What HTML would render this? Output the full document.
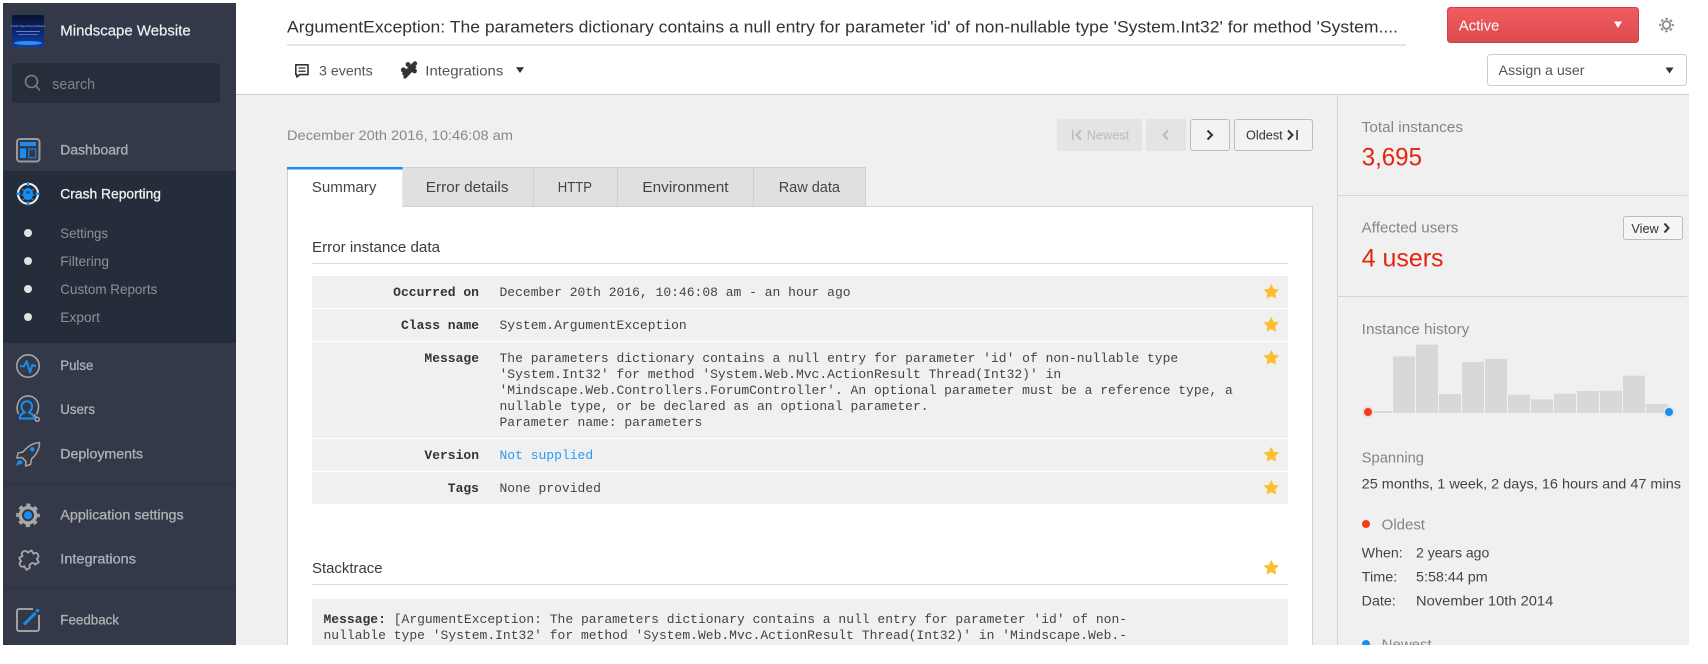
<!DOCTYPE html>
<html lang="en">
<head>
<meta charset="utf-8">
<title>ArgumentException - Crash Reporting</title>
<style>
html,body{margin:0;padding:0;background:#fff;width:1708px;height:664px;overflow:hidden}
svg{display:block}
text{font-family:"Liberation Sans",sans-serif;white-space:pre}
.m{font-family:"Liberation Mono",monospace;font-size:13px;fill:#444}
.mb{font-family:"Liberation Mono",monospace;font-size:13px;font-weight:700;fill:#333}
.nav{font-size:14px;fill:#aeb0b6;stroke:#aeb0b6;stroke-width:.3}
.sub{font-size:14px;fill:#8e919a}
.lab{font-size:14.5px;fill:#858585}
.val{font-size:14px;fill:#444}
.num{font-size:25px;fill:#e1260d}
.tab{font-size:14.5px;fill:#444}
.h{font-size:14.5px;fill:#3a3a3a}
</style>
</head>
<body>
<svg width="1708" height="664" viewBox="0 0 1708 664" xmlns="http://www.w3.org/2000/svg">
<defs>
<linearGradient id="red" x1="0" y1="0" x2="0" y2="1"><stop offset="0" stop-color="#f25c60"/><stop offset="1" stop-color="#dc4b4d"/></linearGradient>
<linearGradient id="logo" x1="0" y1="0" x2="0" y2="1"><stop offset="0" stop-color="#0a1230"/><stop offset=".6" stop-color="#0b2a78"/><stop offset="1" stop-color="#0d3fa8"/></linearGradient>
<polygon id="star" points="0,-7.5 2.2,-2.9 7.13,-2.32 3.6,1.17 4.41,6.07 0,3.8 -4.41,6.07 -3.6,1.17 -7.13,-2.32 -2.2,-2.9" fill="#fdbf2d" stroke="#fdbf2d" stroke-width=".6" stroke-linejoin="round"/>
</defs>

<!-- page -->
<rect width="1708" height="664" fill="#fff"/>
<rect x="236" y="94" width="1453" height="551" fill="#f0f0f0"/>
<rect x="236" y="94" width="1453" height="1" fill="#d0d0d0"/>

<!-- sidebar -->
<rect x="3" y="3" width="233" height="642" fill="#333948"/>
<rect x="3" y="171" width="233" height="172" fill="#252c3a"/>
<rect x="3" y="483" width="233" height="1" fill="#2a303d"/>
<rect x="3" y="588" width="233" height="1" fill="#2a303d"/>

<!-- logo -->
<rect x="12" y="15" width="32" height="32" rx="2" fill="url(#logo)"/>
<text x="28" y="27" font-size="3" fill="#9fb8ea" text-anchor="middle">Crash Reporting Software</text>
<rect x="16" y="31" width="24" height="1" fill="#5f80c8"/>
<rect x="18" y="34" width="20" height="1" fill="#4f70c0"/>
<ellipse cx="28" cy="43" rx="14" ry="2" fill="#2a8cf5"/>
<text x="60.3" y="35.5" font-size="14.5" fill="#eef0f2" stroke="#eef0f2" stroke-width=".2" textLength="130.4" lengthAdjust="spacingAndGlyphs">Mindscape Website</text>

<!-- search -->
<rect x="12" y="63" width="208" height="40" rx="3" fill="#262d3b"/>
<circle cx="31.5" cy="81.5" r="6" fill="none" stroke="#7b7f86" stroke-width="1.6"/>
<path d="M36 86l4 4.5" stroke="#7b7f86" stroke-width="1.6" fill="none"/>
<text x="52.3" y="89" font-size="14.5" fill="#80848c" textLength="42.7" lengthAdjust="spacingAndGlyphs">search</text>

<!-- nav: dashboard -->
<rect x="17" y="139" width="22.5" height="22.5" rx="3" fill="none" stroke="#9a9a9a" stroke-width="2"/>
<rect x="20" y="142" width="16" height="4" fill="#1a8df0"/>
<rect x="20" y="148.5" width="6" height="9.5" fill="#1a8df0"/>
<rect x="28.8" y="149" width="6.9" height="8.7" fill="none" stroke="#1a8df0" stroke-width="1"/>
<text class="nav" x="60.3" y="154.3" textLength="68" lengthAdjust="spacingAndGlyphs">Dashboard</text>

<!-- nav: crash reporting -->
<circle cx="28" cy="193.7" r="10" fill="none" stroke="#f2f2f2" stroke-width="2"/>
<path d="M28 182v4M28 201.5v4M16.5 193.7h4M35.5 193.7h4" stroke="#1a8df0" stroke-width="2.4"/>
<ellipse cx="28" cy="194" rx="5" ry="6" fill="#1a8df0"/>
<path d="M22 189l3 2M34 189l-3 2M21.5 195h3M34.5 195h-3M22.5 200l3-2M33.5 200l-3-2" stroke="#1a8df0" stroke-width="1.2"/>
<rect x="26" y="191" width="4" height="3" fill="#0c5fae"/>
<text x="60.3" y="198.3" font-size="14" fill="#f2f3f4" stroke="#f2f3f4" stroke-width=".3" textLength="100.7" lengthAdjust="spacingAndGlyphs">Crash Reporting</text>

<circle cx="28" cy="233" r="4" fill="#e2e2e2"/>
<text class="sub" x="60.3" y="238" textLength="47.7" lengthAdjust="spacingAndGlyphs">Settings</text>
<circle cx="28" cy="261" r="4" fill="#e2e2e2"/>
<text class="sub" x="60.3" y="266" textLength="48.7" lengthAdjust="spacingAndGlyphs">Filtering</text>
<circle cx="28" cy="289" r="4" fill="#e2e2e2"/>
<text class="sub" x="60.3" y="294" textLength="97" lengthAdjust="spacingAndGlyphs">Custom Reports</text>
<circle cx="28" cy="317" r="4" fill="#e2e2e2"/>
<text class="sub" x="60.3" y="322" textLength="39.7" lengthAdjust="spacingAndGlyphs">Export</text>

<!-- pulse -->
<circle cx="28" cy="366" r="11.2" fill="none" stroke="#a5a5a5" stroke-width="1.6"/>
<polyline points="20,366.3 24,366.3 26.7,361 30,372.3 32.3,365 36,366.3" fill="none" stroke="#1a8df0" stroke-width="2" stroke-linejoin="round"/>
<text class="nav" x="60.3" y="370" textLength="33" lengthAdjust="spacingAndGlyphs">Pulse</text>

<!-- users -->
<path d="M18.5 414c-3-6-1-15 6-17.5c7-2 13 2 14 9c.3 3-.5 6-2 9" fill="none" stroke="#a5a5a5" stroke-width="1.6"/>
<path d="M20 418.5v-2c0-2 3-3 4.5-4c-2-2-3-4-3-6a5.3 5.3 0 0 1 10.6 0c0 2-1 4-3 6c1.5 1 4.5 2 4.5 4v2z" fill="none" stroke="#1a8df0" stroke-width="2"/>
<circle cx="37.3" cy="419.3" r="2" fill="none" stroke="#a5a5a5" stroke-width="1.5"/>
<path d="M34 414.5l2.3 3" stroke="#a5a5a5" stroke-width="1.5"/>
<text class="nav" x="60.3" y="414" textLength="34.7" lengthAdjust="spacingAndGlyphs">Users</text>

<!-- deployments -->
<path d="M39.5 442.5C33 443 27 447 23 452L18 453L17 458L22 457.5L26 461.5L25.5 466L30.5 464.5L31.5 459C36 455 39.5 449 39.5 442.5Z" fill="none" stroke="#a5a5a5" stroke-width="1.5" stroke-linejoin="round"/>
<circle cx="32.3" cy="449.3" r="2.2" fill="#1a8df0"/>
<polygon points="16,466 18,460.5 21.5,460.5 23,463" fill="#1a8df0"/>
<text class="nav" x="60.3" y="458.3" textLength="82.7" lengthAdjust="spacingAndGlyphs">Deployments</text>

<!-- app settings -->
<circle cx="28" cy="515.3" r="7.7" fill="none" stroke="#a8a8a8" stroke-width="3.4"/>
<circle cx="28" cy="515.3" r="10.5" fill="none" stroke="#a8a8a8" stroke-width="2.6" stroke-dasharray="4.12 4.12" stroke-dashoffset="2"/>
<circle cx="28" cy="515.3" r="4" fill="#1a8df0"/>
<text class="nav" x="60.3" y="519.3" textLength="123.4" lengthAdjust="spacingAndGlyphs">Application settings</text>

<!-- integrations -->
<g transform="rotate(-32 28 559)">
<path d="M21 553.5H25C24 549 32 549 31 553.5H35.5V557.5C40 556.5 40 564 35.5 563.5V567.5H31C32 563.5 24.5 563.5 25 567.5H21V563C17 564 17 556.5 21 557.5Z" fill="none" stroke="#a5a5a5" stroke-width="1.8" stroke-linejoin="round"/>
</g>
<text class="nav" x="60.3" y="563.3" textLength="75.7" lengthAdjust="spacingAndGlyphs">Integrations</text>

<!-- feedback -->
<path d="M33 609H19a2 2 0 0 0-2 2V629a2 2 0 0 0 2 2H37a2 2 0 0 0 2-2V615" fill="none" stroke="#a0a0a0" stroke-width="2"/>
<path d="M24 624.5L35.5 613" stroke="#1a8df0" stroke-width="3"/>
<circle cx="37.5" cy="610.5" r="1.8" fill="#1a8df0"/>
<text class="nav" x="60.3" y="624.3" textLength="58.7" lengthAdjust="spacingAndGlyphs">Feedback</text>

<!-- header -->
<text x="287" y="32.3" font-size="16.5" fill="#333" textLength="1111" lengthAdjust="spacingAndGlyphs">ArgumentException: The parameters dictionary contains a null entry for parameter 'id' of non-nullable type 'System.Int32' for method 'System....</text>
<rect x="287" y="44" width="1119" height="2" fill="#e5e5e5"/>

<rect x="1447.5" y="7.5" width="191" height="35" rx="3" fill="url(#red)" stroke="#c9434a"/>
<text x="1458.8" y="30.3" font-size="14.5" fill="#fff" textLength="40.5" lengthAdjust="spacingAndGlyphs">Active</text>
<polygon points="1614,21.5 1622,21.5 1618,28" fill="#fff"/>

<circle cx="1666.5" cy="25" r="3.8" fill="none" stroke="#8a8a8a" stroke-width="1.8"/>
<circle cx="1666.5" cy="25" r="6.3" fill="none" stroke="#8a8a8a" stroke-width="2" stroke-dasharray="2.47 2.47" stroke-dashoffset="1.2"/>

<!-- chat icon -->
<path d="M295.8 64.8H308V74.6H299.8L296.8 77V74.6H295.8Z" fill="none" stroke="#333" stroke-width="1.6" stroke-linejoin="round"/>
<path d="M298.5 68h7M298.5 71.2h7" stroke="#333" stroke-width="1.3"/>
<text x="319" y="75.3" font-size="14" fill="#555" textLength="53.7" lengthAdjust="spacingAndGlyphs">3 events</text>

<!-- integrations icon -->
<g fill="#333">
<path d="M404 76L414.5 65" stroke="#333" stroke-width="6"/>
<circle cx="403.5" cy="70" r="2.6"/>
<circle cx="414.5" cy="71" r="2.4"/>
<circle cx="408" cy="64.5" r="2.4"/>
<circle cx="415" cy="63.5" r="2.2"/>
<circle cx="405" cy="77" r="1.6"/>
</g>
<text x="425.3" y="75.3" font-size="14" fill="#555" textLength="78" lengthAdjust="spacingAndGlyphs">Integrations</text>
<polygon points="516,67.3 524,67.3 520,73" fill="#333"/>

<rect x="1487.5" y="54.5" width="199" height="31" rx="3" fill="#fff" stroke="#ccc"/>
<text x="1498.5" y="75" font-size="14" fill="#555" textLength="86" lengthAdjust="spacingAndGlyphs">Assign a user</text>
<polygon points="1665.5,67.5 1673.5,67.5 1669.5,73.5" fill="#333"/>

<!-- date & pager -->
<text x="287" y="140" font-size="14" fill="#888" textLength="226" lengthAdjust="spacingAndGlyphs">December 20th 2016, 10:46:08 am</text>

<rect x="1057" y="119" width="85" height="32" rx="2.5" fill="#e4e4e4"/>
<rect x="1072" y="130" width="1.5" height="10" fill="#bbb"/>
<polyline points="1081,130.5 1076.5,135 1081,139.5" fill="none" stroke="#bbb" stroke-width="2"/>
<text x="1086.7" y="139.5" font-size="13" fill="#bbb" textLength="42.6" lengthAdjust="spacingAndGlyphs">Newest</text>

<rect x="1146" y="119" width="40" height="32" rx="2.5" fill="#e4e4e4"/>
<polyline points="1168,130.5 1163.5,135 1168,139.5" fill="none" stroke="#bbb" stroke-width="2"/>

<rect x="1190.5" y="119.5" width="39" height="31" rx="2.5" fill="#f3f3f3" stroke="#bbb"/>
<polyline points="1207.5,130.5 1212,135 1207.5,139.5" fill="none" stroke="#333" stroke-width="2"/>

<rect x="1234.5" y="119.5" width="78" height="31" rx="2.5" fill="#f3f3f3" stroke="#bbb"/>
<text x="1246" y="139.5" font-size="13" fill="#333" textLength="36.7" lengthAdjust="spacingAndGlyphs">Oldest</text>
<polyline points="1288,130.5 1292.5,135 1288,139.5" fill="none" stroke="#333" stroke-width="2"/>
<rect x="1296.3" y="130" width="1.5" height="10" fill="#333"/>

<!-- panel -->
<rect x="287.5" y="206.5" width="1025" height="450" fill="#fff" stroke="#d0d0d0"/>
<rect x="402.5" y="167.5" width="131" height="39" fill="#e0e0e0" stroke="#d0d0d0"/>
<rect x="533.5" y="167.5" width="84" height="39" fill="#e0e0e0" stroke="#d0d0d0"/>
<rect x="617.5" y="167.5" width="136" height="39" fill="#e0e0e0" stroke="#d0d0d0"/>
<rect x="753.5" y="167.5" width="112" height="39" fill="#e0e0e0" stroke="#d0d0d0"/>
<rect x="287" y="167" width="115.5" height="41" fill="#fff"/>
<rect x="287" y="167" width="1" height="41" fill="#d0d0d0"/>
<rect x="287" y="167" width="115.5" height="2.5" fill="#1a8df0"/>
<text class="tab" x="311.8" y="192" textLength="64.6" lengthAdjust="spacingAndGlyphs">Summary</text>
<text class="tab" x="425.8" y="192" textLength="82.7" lengthAdjust="spacingAndGlyphs">Error details</text>
<text class="tab" x="557.8" y="192" textLength="34.2" lengthAdjust="spacingAndGlyphs">HTTP</text>
<text class="tab" x="642.4" y="192" textLength="86.1" lengthAdjust="spacingAndGlyphs">Environment</text>
<text class="tab" x="778.7" y="192" textLength="61.3" lengthAdjust="spacingAndGlyphs">Raw data</text>

<text class="h" x="312" y="252" textLength="128" lengthAdjust="spacingAndGlyphs">Error instance data</text>
<rect x="312" y="263" width="976" height="1" fill="#ddd"/>

<!-- table -->
<g fill="#f0f0f0">
<rect x="312" y="276" width="976" height="32"/>
<rect x="312" y="309" width="976" height="32"/>
<rect x="312" y="342" width="976" height="96"/>
<rect x="312" y="439" width="976" height="32"/>
<rect x="312" y="472" width="976" height="32"/>
</g>
<g text-anchor="end">
<text class="mb" x="479" y="296">Occurred on</text>
<text class="mb" x="479" y="329">Class name</text>
<text class="mb" x="479" y="362">Message</text>
<text class="mb" x="479" y="459">Version</text>
<text class="mb" x="479" y="492">Tags</text>
</g>
<text class="m" x="499.5" y="296">December 20th 2016, 10:46:08 am - an hour ago</text>
<text class="m" x="499.5" y="329">System.ArgumentException</text>
<text class="m" x="499.5" y="362">The parameters dictionary contains a null entry for parameter 'id' of non-nullable type</text>
<text class="m" x="499.5" y="378">'System.Int32' for method 'System.Web.Mvc.ActionResult Thread(Int32)' in</text>
<text class="m" x="499.5" y="394">'Mindscape.Web.Controllers.ForumController'. An optional parameter must be a reference type, a</text>
<text class="m" x="499.5" y="410">nullable type, or be declared as an optional parameter.</text>
<text class="m" x="499.5" y="426">Parameter name: parameters</text>
<text class="m" x="499.5" y="459" style="fill:#2a9af5">Not supplied</text>
<text class="m" x="499.5" y="492">None provided</text>
<use href="#star" x="1271.3" y="292"/>
<use href="#star" x="1271.3" y="325"/>
<use href="#star" x="1271.3" y="358"/>
<use href="#star" x="1271.3" y="455"/>
<use href="#star" x="1271.3" y="488"/>

<!-- stacktrace -->
<text class="h" x="312" y="573" textLength="70.5" lengthAdjust="spacingAndGlyphs">Stacktrace</text>
<use href="#star" x="1271.3" y="568"/>
<rect x="312" y="584" width="976" height="1" fill="#ddd"/>
<rect x="312" y="599" width="976" height="60" fill="#f0f0f0"/>
<text class="m" x="323.5" y="623"><tspan class="mb">Message:</tspan> [ArgumentException: The parameters dictionary contains a null entry for parameter 'id' of non-</text>
<text class="m" x="323.5" y="639">nullable type 'System.Int32' for method 'System.Web.Mvc.ActionResult Thread(Int32)' in 'Mindscape.Web.-</text>

<!-- right column -->
<rect x="1337" y="95" width="1" height="560" fill="#d4d4d4"/>
<rect x="1337" y="195" width="350" height="1" fill="#d4d4d4"/>
<rect x="1337" y="296" width="350" height="1" fill="#d4d4d4"/>

<text class="lab" x="1361.7" y="132" textLength="101.3" lengthAdjust="spacingAndGlyphs">Total instances</text>
<text class="num" x="1361.7" y="165.7" textLength="60.3" lengthAdjust="spacingAndGlyphs">3,695</text>
<text class="lab" x="1361.7" y="232.7" textLength="96.7" lengthAdjust="spacingAndGlyphs">Affected users</text>
<rect x="1623.5" y="216.5" width="59" height="23" rx="2.5" fill="#f5f5f5" stroke="#bbb"/>
<text x="1631.4" y="233" font-size="13" fill="#333" textLength="27.3" lengthAdjust="spacingAndGlyphs">View</text>
<polyline points="1664.5,223.5 1668.5,228 1664.5,232.5" fill="none" stroke="#333" stroke-width="2"/>
<text class="num" x="1361.7" y="266.7" textLength="81.8" lengthAdjust="spacingAndGlyphs">4 users</text>

<text class="lab" x="1361.7" y="334" textLength="107.6" lengthAdjust="spacingAndGlyphs">Instance history</text>
<g fill="#d8d8d8">
<rect x="1370" y="411" width="22" height="2"/>
<rect x="1393" y="356.3" width="22" height="56.7"/>
<rect x="1416" y="344.7" width="22" height="68.3"/>
<rect x="1439" y="394" width="22" height="19"/>
<rect x="1462" y="362" width="22" height="51"/>
<rect x="1485" y="359" width="22" height="54"/>
<rect x="1508" y="394.7" width="22" height="18.3"/>
<rect x="1531" y="399.3" width="22" height="13.7"/>
<rect x="1554" y="393.7" width="22" height="19.3"/>
<rect x="1577" y="391" width="22" height="22"/>
<rect x="1600" y="390.7" width="22" height="22.3"/>
<rect x="1623" y="375.7" width="22" height="37.3"/>
<rect x="1646" y="404" width="22" height="9"/>
</g>
<circle cx="1368" cy="412" r="6" fill="#e4e4e4"/>
<circle cx="1368" cy="412" r="4" fill="#f8391c"/>
<circle cx="1669" cy="412" r="6" fill="#e4e4e4"/>
<circle cx="1669" cy="412" r="4" fill="#1a8df0"/>

<text class="lab" x="1361.7" y="462.7" textLength="62.3" lengthAdjust="spacingAndGlyphs">Spanning</text>
<text class="val" x="1361.7" y="488.3" textLength="319.3" lengthAdjust="spacingAndGlyphs">25 months, 1 week, 2 days, 16 hours and 47 mins</text>

<circle cx="1366" cy="524" r="4" fill="#f8391c"/>
<text class="lab" x="1381.7" y="529.3" textLength="43.3" lengthAdjust="spacingAndGlyphs">Oldest</text>
<text class="val" x="1361.7" y="557.3" textLength="41" lengthAdjust="spacingAndGlyphs">When:</text>
<text class="val" x="1416" y="557.3" textLength="73.3" lengthAdjust="spacingAndGlyphs">2 years ago</text>
<text class="val" x="1361.7" y="581.3" textLength="35.6" lengthAdjust="spacingAndGlyphs">Time:</text>
<text class="val" x="1416" y="581.3" textLength="71.7" lengthAdjust="spacingAndGlyphs">5:58:44 pm</text>
<text class="val" x="1361.7" y="605.3" textLength="34" lengthAdjust="spacingAndGlyphs">Date:</text>
<text class="val" x="1416" y="605.3" textLength="137.3" lengthAdjust="spacingAndGlyphs">November 10th 2014</text>

<circle cx="1366" cy="644" r="4" fill="#1a8df0"/>
<text class="lab" x="1381.7" y="649.3" textLength="50" lengthAdjust="spacingAndGlyphs">Newest</text>

<!-- crop edges -->
<rect x="0" y="645" width="1708" height="19" fill="#fff"/>
<rect x="1689" y="94" width="19" height="570" fill="#fff"/>
</svg>
</body>
</html>
